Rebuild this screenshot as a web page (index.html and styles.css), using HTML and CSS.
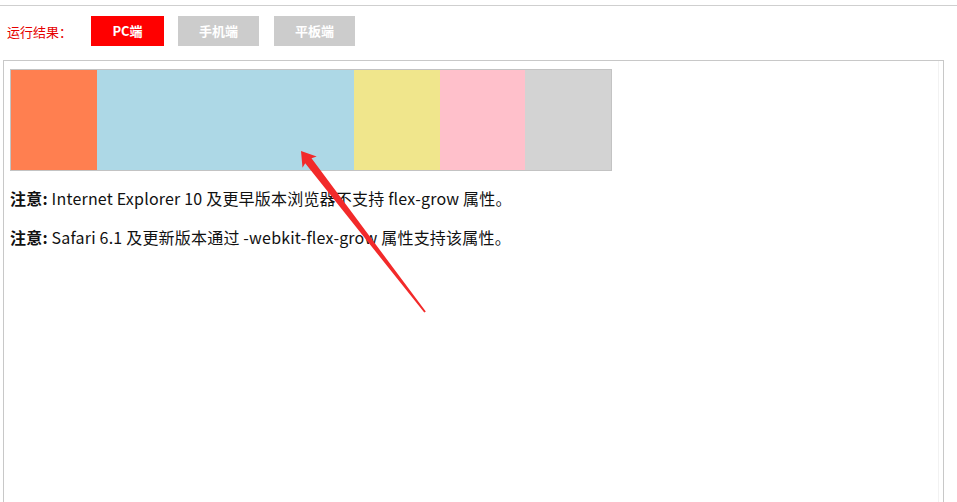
FILE: index.html
```html
<!DOCTYPE html>
<html lang="zh-CN">
<head>
<meta charset="utf-8">
<title>运行结果</title>
<link rel="stylesheet" href="styles.css">
</head>
<body>
<div class="page">
  <div class="toprule"></div>
  <div class="toolbar">
    <span class="label">运行结果：</span>
    <span class="btn btn-active">PC端</span>
    <span class="btn btn-gap">手机端</span>
    <span class="btn">平板端</span>
  </div>
  <div class="frame">
    <div class="flexbox">
      <div class="item coral"></div>
      <div class="item blue"></div>
      <div class="item khaki"></div>
      <div class="item pink"></div>
      <div class="item grey"></div>
    </div>
    <p class="note"><b>注意:</b> Internet Explorer 10 及更早版本浏览器不支持 flex-grow 属性。</p>
    <p class="note"><b>注意:</b> Safari 6.1 及更新版本通过 -webkit-flex-grow 属性支持该属性。</p>
    <div class="scrolledge"></div>
  </div>
  <svg class="arrow" width="957" height="502" viewBox="0 0 957 502" aria-hidden="true">
    <polygon points="301,151 316.7,156.6 311.5,158.3 425.8,311.6 424.3,312.6 305.2,163.2 302.5,167.8" fill="#f22a2a"/>
  </svg>
</div>
</body>
</html>
```

FILE: styles.css
```css
html, body {
  margin: 0;
  padding: 0;
  background: #fff;
  overflow: hidden;
}

.page {
  position: relative;
  width: 957px;
  height: 502px;
  overflow: hidden;
  font-family: "Noto Sans CJK SC", "Noto Sans", sans-serif;
}

.toprule {
  margin-top: 5px;
  height: 1px;
  background: #cfcfcf;
}

.toolbar {
  display: flex;
  align-items: center;
  margin-top: 10px;
  padding-left: 7px;
  height: 30px;
}

.label {
  color: #e60000;
  font-size: 13px;
  width: 84px;
}

.btn {
  display: block;
  width: 81px;
  height: 30px;
  line-height: 30px;
  text-align: center;
  margin-right: 14px;
  background: #cccccc;
  color: #fff;
  font-size: 13px;
  font-weight: bold;
}

.btn-active {
  width: 73px;
  background: #ff0000;
}

.btn-gap {
  margin-right: 15px;
}

.frame {
  position: relative;
  margin: 14px 0 0 3px;
  width: 941px;
  height: 460px;
  border: 1px solid #c8c8c8;
  padding: 8px 0 0 6px;
  box-sizing: border-box;
  color: #111;
}

.flexbox {
  display: flex;
  width: 600px;
  height: 100px;
  border: 1px solid #c3c3c3;
}

.item {
  flex-grow: 1;
}

.coral { background: coral; }
.blue { background: lightblue; flex-grow: 3; }
.khaki { background: khaki; }
.pink { background: pink; }
.grey { background: lightgrey; }

.note {
  margin: 16px 0;
  font-size: 16px;
  line-height: 23px;
  letter-spacing: 0.2px;
}

.note b {
  font-weight: bold;
}

.scrolledge {
  position: absolute;
  top: 0;
  bottom: 0;
  right: 4px;
  width: 1px;
  background: #f2f2f2;
}

.arrow {
  position: absolute;
  left: 0;
  top: 0;
  pointer-events: none;
}
```
